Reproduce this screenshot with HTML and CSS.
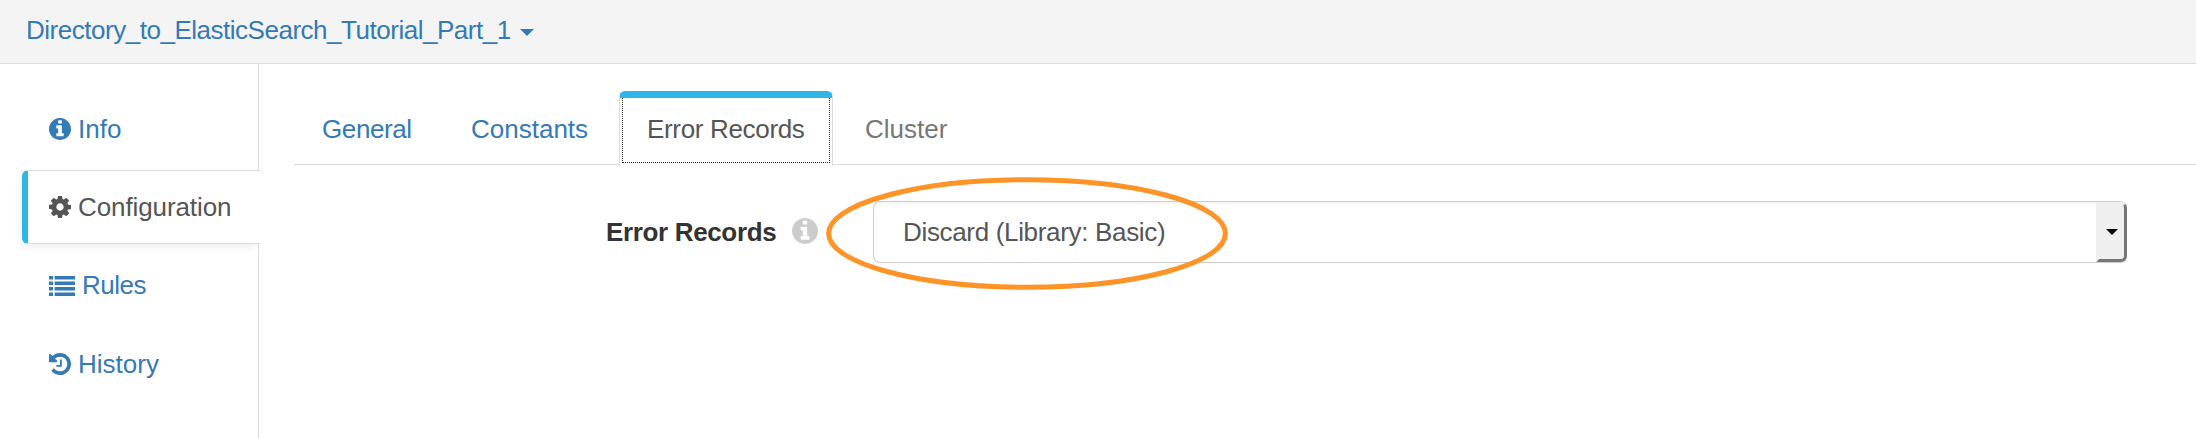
FILE: index.html
```
<!DOCTYPE html>
<html lang="en">
<head>
<meta charset="utf-8">
<title>Pipeline Configuration</title>
<link rel="stylesheet" href="styles.css">
</head>
<body>
<svg class="sprite" width="0" height="0" aria-hidden="true">
  <symbol id="info" viewBox="128 128 1536 1536"><path d="M1152 1376v-160q0-14-9-23t-23-9h-96v-512q0-14-9-23t-23-9h-320q-14 0-23 9t-9 23v160q0 14 9 23t23 9h96v320h-96q-14 0-23 9t-9 23v160q0 14 9 23t23 9h448q14 0 23-9t9-23zm-128-896v-160q0-14-9-23t-23-9h-192q-14 0-23 9t-9 23v160q0 14 9 23t23 9h192q14 0 23-9t9-23zm640 416q0 209-103 385.5t-279.5 279.5-385.5 103-385.5-103-279.5-279.5-103-385.5 103-385.5 279.5-279.5 385.5-103 385.5 103 279.5 279.5 103 385.5z"/></symbol>
  <symbol id="cog" viewBox="128 128 1536 1536"><path d="M1152 896q0-106-75-181t-181-75-181 75-75 181 75 181 181 75 181-75 75-181zm512-109v222q0 12-8 23t-20 13l-185 28q-19 54-39 91 35 50 107 138 10 12 10 25t-9 23q-27 37-99 108t-94 71q-12 0-26-9l-138-108q-44 23-91 38-16 136-29 186-7 28-36 28h-222q-14 0-24.5-8.5t-11.5-21.5l-28-184q-49-16-90-37l-141 107q-10 9-25 9-14 0-25-11-126-114-165-168-7-10-7-23 0-12 8-23 15-21 51-66.5t54-70.5q-27-50-41-99l-183-27q-13-2-21-12.5t-8-23.5v-222q0-12 8-23t19-13l186-28q14-46 39-92-40-57-107-138-10-12-10-24 0-10 9-23 26-36 98.5-107.5t94.5-71.5q13 0 26 10l138 107q44-23 91-38 16-136 29-186 7-28 36-28h222q14 0 24.5 8.5t11.5 21.5l28 184q49 16 90 37l142-107q9-9 24-9 13 0 25 10 129 119 165 170 7 8 7 22 0 12-8 23-15 21-51 66.5t-54 70.5q26 50 41 98l183 28q13 2 21 12.5t8 23.5z"/></symbol>
  <symbol id="list" viewBox="0 0 26 20"><path d="M0 0h4v3.4H0zM5.6 0H26v3.4H5.6zM0 5.5h4v3.4H0zM5.6 5.5H26v3.4H5.6zM0 11h4v3.4H0zM5.6 11H26v3.4H5.6zM0 16.6h4V20H0zM5.6 16.6H26V20H5.6z"/></symbol>
  <symbol id="history" viewBox="128 128 1536 1536"><path d="M1664 896q0 156-61 298t-164 245-245 164-298 61q-172 0-327-72.5t-264-204.5q-7-10-6.5-22.5t8.5-20.5l137-138q10-9 25-9 16 2 23 12 73 95 179 147t225 52q104 0 198.5-40.5t163.5-109.5 109.5-163.5 40.5-198.5-40.5-198.5-109.5-163.5-163.5-109.5-198.5-40.5q-98 0-188 35.5t-160 101.5l137 138q31 30 14 69-17 40-59 40h-448q-26 0-45-19t-19-45v-448q0-42 40-59 39-17 69 14l130 129q107-101 244.5-156.5t284.5-55.5q156 0 298 61t245 164 164 245 61 298zm-640-288v448q0 14-9 23t-23 9h-320q-14 0-23-9t-9-23v-64q0-14 9-23t23-9h224v-352q0-14 9-23t23-9h64q14 0 23 9t9 23z"/></symbol>
</svg>
<header class="topbar">
  <a class="pipeline-name">Directory_to_ElasticSearch_Tutorial_Part_1</a>
  <svg class="caret" viewBox="0 0 14 7"><path d="M0 0h14L7 7z"/></svg>
</header>
<div class="layout">
  <nav class="sidebar">
    <a class="side-item"><svg class="icon"><use href="#info"/></svg><span>Info</span></a>
    <a class="side-item active"><svg class="icon"><use href="#cog"/></svg><span>Configuration</span></a>
    <a class="side-item rules"><svg class="icon icon-list"><use href="#list"/></svg><span>Rules</span></a>
    <a class="side-item"><svg class="icon"><use href="#history"/></svg><span>History</span></a>
  </nav>
  <main class="content">
    <div class="tabs">
      <a class="tab tab-general">General</a>
      <a class="tab tab-constants">Constants</a>
      <a class="tab active"><span class="focus">Error Records</span></a>
      <a class="tab disabled">Cluster</a>
    </div>
    <div class="form-row">
      <label class="field-label">Error Records</label>
      <svg class="help"><use href="#info"/></svg>
      <div class="select">
        <span class="value">Discard (Library: Basic)</span>
        <span class="arrow"><svg class="arrow-icon" viewBox="0 0 12 6"><path d="M0 0h12L6 6z"/></svg></span>
        <svg class="highlight" viewBox="0 0 402 113"><ellipse cx="201" cy="56.5" rx="198.4" ry="53.7"/></svg>
      </div>
    </div>
  </main>
</div>
</body>
</html>
```
FILE: styles.css
```
* { box-sizing: border-box; }
body {
  margin: 0;
  height: 438px;
  overflow: hidden;
  display: flex;
  flex-direction: column;
  background: #fff;
  color: #555;
  font: 26px/37px "Liberation Sans", Arial, sans-serif;
  white-space: nowrap;
}
.sprite { position: absolute; }
svg { display: block; flex: none; }
.topbar {
  height: 64px;
  flex: none;
  display: flex;
  align-items: flex-start;
  padding: 12px 0 0 26px;
  gap: 8px;
  background: #f4f4f4;
  border-bottom: 1px solid #dcdcdc;
  color: #337ab7;
}
.pipeline-name { width: 486px; letter-spacing: -0.48px; }
.caret { width: 14px; height: 7px; margin-top: 17px; fill: #337ab7; }
.layout { flex: 1; display: flex; }
.sidebar {
  width: 259px;
  flex: none;
  display: flex;
  flex-direction: column;
  gap: 4.4px;
  padding: 28px 0 0 22px;
  border-right: 1px solid #dcdcdc;
}
.side-item {
  height: 74px;
  flex: none;
  display: flex;
  align-items: center;
  gap: 7px;
  padding-left: 27px;
  color: #337ab7;
}
.side-item.active {
  margin-right: -2px;
  padding-left: 21px;
  color: #555;
  background: #fff;
  border: 1px solid #dcdcdc;
  border-left: 6px solid #2eb6e8;
  border-right: 0;
  border-radius: 6px 0 0 6px;
  box-shadow: -3px 5px 8px -2px rgba(0, 0, 0, .07);
  letter-spacing: -0.1px;
}
.side-item.rules { letter-spacing: -0.5px; }
.icon { width: 22px; height: 22px; fill: currentColor; }
.icon-list { width: 26px; height: 20px; }
.content { flex: 1; padding: 27px 0 0 35px; }
.tabs {
  height: 74px;
  display: flex;
  border-bottom: 1px solid #dcdcdc;
}
.tab { height: 74px; padding-top: 20px; color: #337ab7; }
.tab-general { width: 149px; padding-left: 28px; letter-spacing: -0.4px; }
.tab-constants { width: 176px; padding-left: 28px; }
.tab.active {
  width: 214px;
  height: 75px;
  padding: 0 2px 2px;
  color: #555;
  background: #fff;
  border: 1px solid #dcdcdc;
  border-top: 7px solid #2eb6e8;
  border-bottom: 0;
  border-radius: 6px 6px 0 0;
  letter-spacing: -0.33px;
}
.focus {
  display: block;
  height: 65px;
  padding: 13px 0 0 24px;
  border: 1px dotted #333;
  border-top: 0;
}
.tab.disabled { padding-left: 32px; color: #777; }
.form-row {
  display: flex;
  align-items: center;
  height: 62px;
  margin-top: 36px;
  padding-left: 312px;
}
.field-label { width: 186px; padding-top: 1px; font-weight: 700; color: #333; letter-spacing: -0.35px; }
.help { width: 26px; height: 26px; margin-top: -2px; fill: #ccc; }
.select {
  position: relative;
  width: 1254px;
  height: 62px;
  margin-left: 55px;
  display: flex;
  align-items: center;
  justify-content: space-between;
  padding-left: 29px;
  border: 1px solid #ccc;
  border-right: 0;
  border-radius: 7px;
  box-shadow: inset 0 2px 2px rgba(0, 0, 0, .04);
}
.value { padding-top: 1px; letter-spacing: -0.33px; }
.arrow {
  width: 31px;
  height: 60px;
  display: flex;
  align-items: center;
  justify-content: center;
  background: #efefef;
  border: solid #777;
  border-color: #efefef #777 #777 #efefef;
  border-width: 3px;
  border-radius: 0 6px 6px 0;
}
.arrow-icon { width: 12px; height: 6px; fill: #000; }
.highlight {
  position: absolute;
  left: -48px;
  top: -25px;
  width: 402px;
  height: 113px;
  fill: none;
  stroke: #ff9326;
  stroke-width: 5;
}
```
